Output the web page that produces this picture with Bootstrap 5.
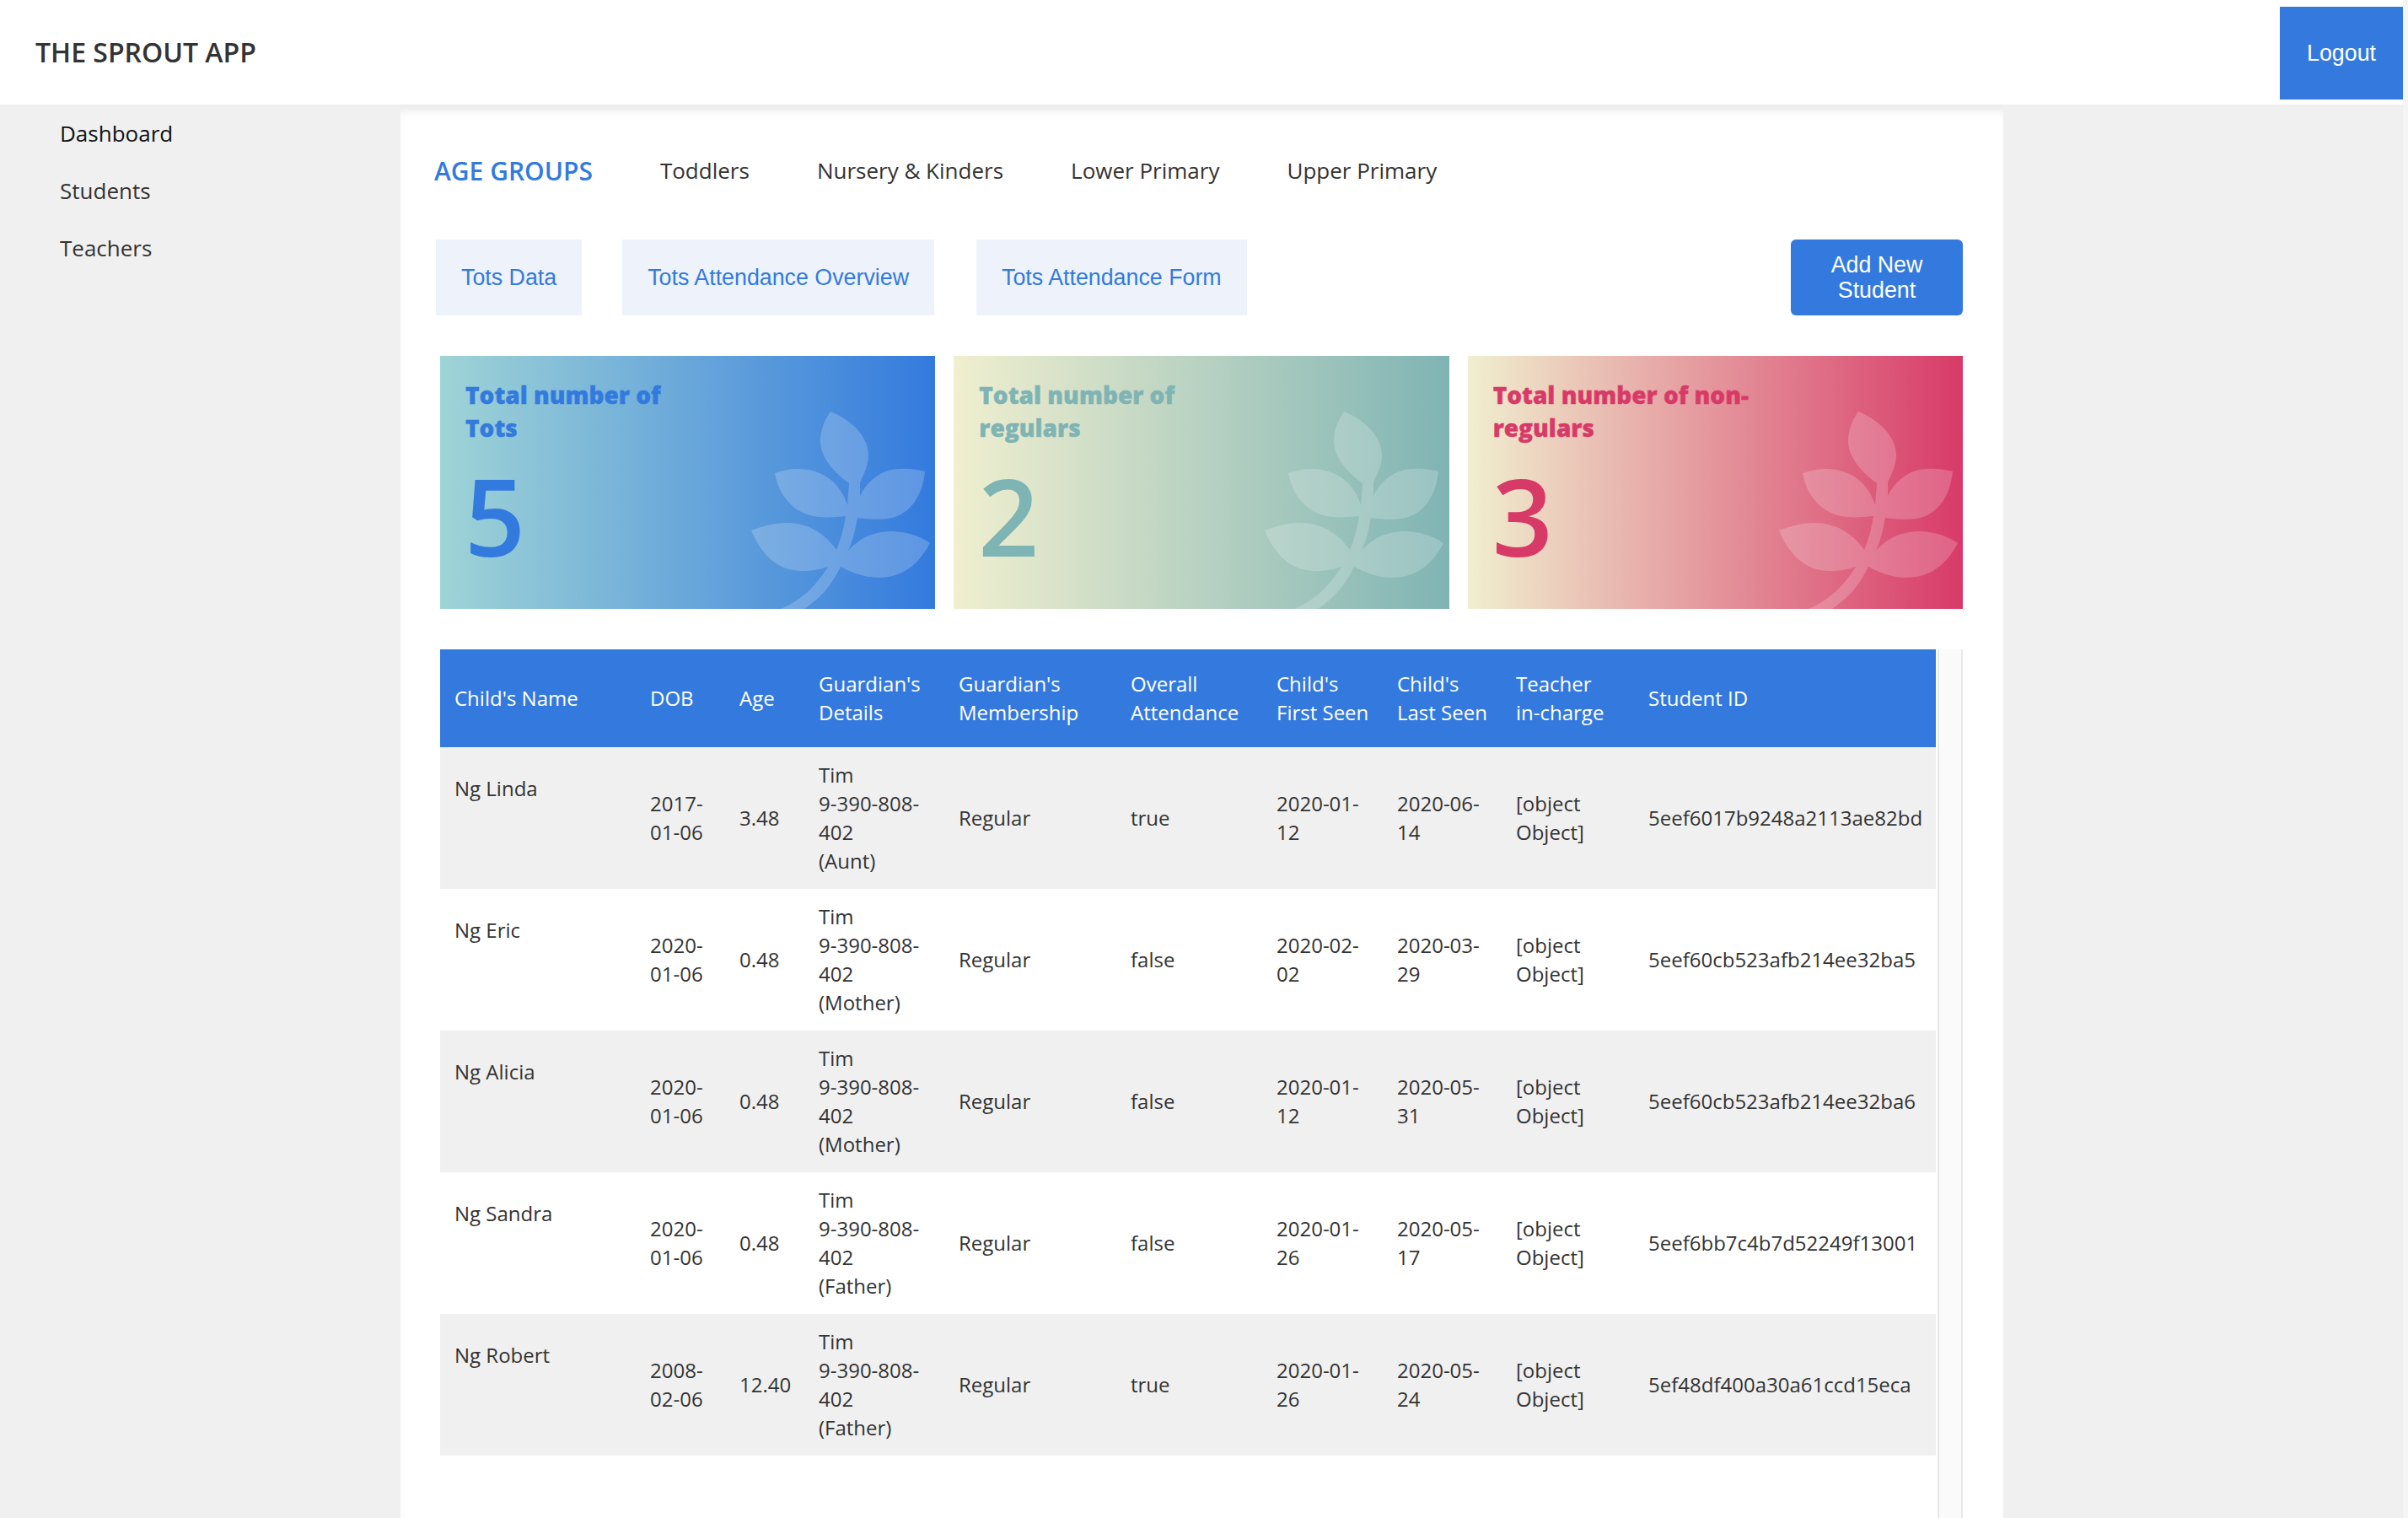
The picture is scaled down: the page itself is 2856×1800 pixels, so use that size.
<!DOCTYPE html>
<html lang="en">
<head>
    <meta charset="UTF-8">
    <meta name="viewport" content="width=device-width, initial-scale=1.0">
    <title>The Sprout App</title>
    <link rel="stylesheet" href="https://cdn.jsdelivr.net/npm/bootstrap@5.3.0/dist/css/bootstrap.min.css">
    <style>
        body {
            font-family: "Open Sans", sans-serif;
            color: #333;
            background: #f5f5f5;
            height: 1800px;
            overflow: hidden;
        }
        .app-shell { width: 2850px; height: 1800px; }

        /* Header */
        .app-header { height: 124px; background: #fff; padding: 8px 0 6px 42px; }
        .app-brand { font-size: 32px; font-weight: 600; color: #333; padding: 0; margin: 0 0 3px; }
        .logout-btn {
            width: 146px; height: 110px; border: 0; border-radius: 0;
            background: #347ade; color: #fff;
            font-family: "Liberation Sans", sans-serif; font-size: 26.8px;
        }

        /* Sidebar */
        .app-body { height: 1676px; background: #f0f0f0; }
        .side-menu { width: 475px; }
        .side-menu .nav-link { height: 68px; line-height: 68px; padding: 0 0 0 71px; font-size: 26px; color: #333; }
        .side-menu .nav-link.active { color: #111; }

        /* Main panel */
        .main-panel {
            width: 1901px; background: #fff; overflow: hidden;
            box-shadow: inset 0 14px 14px -8px rgba(0, 0, 0, .1);
        }
        .age-tabs { margin: 56px 0 0 40px; height: 44px; gap: 80px; align-items: center; }
        .age-tabs .nav-link { padding: 0; font-size: 26px; color: #333; }
        .age-title { font-size: 30px; font-weight: 600; color: #337ade; }

        .sub-row { margin: 60px 48px 0 42px; height: 90px; gap: 48px; }
        .sub-btn {
            height: 90px; padding: 0 30px; border: 0; border-radius: 0;
            background: #eef3fb; color: #337ade;
            font-family: "Liberation Sans", sans-serif; font-size: 26.8px;
        }
        .sub-btn:nth-child(3) { margin-left: 2px; }
        .add-btn {
            width: 204px; height: 90px; padding: 0 30px; border: 0; border-radius: 6px;
            background: #347ade; color: #fff; line-height: 30px;
            font-family: "Liberation Sans", sans-serif; font-size: 26.8px;
        }

        /* Summary tiles */
        .tile-row { margin: 48px 48px 0 47px; gap: 22px; }
        .stat-tile { flex: 1; height: 300px; position: relative; overflow: hidden; padding: 27px 30px; }
        .stat-tile h5 {
            font-size: 28px; line-height: 39px; font-weight: 800; margin: 0; color: inherit;
            white-space: nowrap; -webkit-text-stroke: .4px currentColor;
        }
        .stat-num { font-size: 126px; line-height: 126px; font-weight: 600; margin: 21px 0 0 -1px; }
        .tile-leaf { position: absolute; left: 0; top: 0; width: 588px; height: 300px; fill: #fff; opacity: .2; }
        .tile-blue { background: linear-gradient(90deg, #9fd4d6 0%, #337ade 100%); color: #337ade; }
        .tile-teal { background: linear-gradient(90deg, #f0efcf 0%, #7fb4b4 100%); color: #7fb4b4; }
        .tile-pink { background: linear-gradient(90deg, #f0efcf 0%, #d83a68 100%); color: #d83a68; }

        /* Table */
        .table-wrap { margin: 48px 48px 0 47px; flex-grow: 1; }
        .kids-table {
            width: 1774px; table-layout: fixed; align-self: flex-start; margin: 0;
            font-size: 24px; line-height: 34px;
            --bs-table-striped-bg: #f0f0f0; --bs-table-color: #333; --bs-table-striped-color: #333;
        }
        .kids-table > :not(caption) > * > * { border: 0; padding: 16px 18px; vertical-align: middle; }
        .kids-table thead th { background: #347ade; color: #fff; font-weight: 400; padding: 24px 18px; }
        .kids-table thead th:first-child { padding-left: 17px; }
        .kids-table thead th:nth-child(7), .kids-table thead th:nth-child(8) { padding-right: 8px; }
        .kids-table td.name-cell { vertical-align: top; padding: 32px 18px 16px 17px; }
        .fake-scroll {
            width: 30px; margin-left: 2px; background: #fafafa;
            border-left: 2px solid #e8e8e8; border-right: 2px solid #e8e8e8;
        }
    </style>
</head>
<body>

    <svg width="0" height="0" class="d-block">
        <symbol id="leaf" viewBox="22 22 588 300">
            <path d="M485 88 C510 98 530 118 530 140 C530 152 524 163 520 172 L520 188 C530 168 548 156 567 156 C578 155 588 157 597 159 C595 180 586 200 570 209 C558 217 538 217 517 214 C514 230 511 242 506 253 C518 240 532 231 556 230 C574 230 590 235 603 244 C592 265 574 285 542 285 C526 285 510 279 497 272 C486 295 472 310 454 322 L426 322 C450 312 468 295 482 272 C472 276 462 277 451 277 C420 277 402 255 391 229 C404 224 418 220 433 220 C458 220 478 232 492 252 C497 240 501 226 503 212 C492 213 482 214 473 213 C445 212 424 190 419 161 C428 158 437 156 446 156 C478 156 498 175 505 199 L507 173 C486 158 473 140 473 123 C473 110 478 98 485 88 Z"/>
        </symbol>
    </svg>

    <div class="app-shell d-flex flex-column">
        <!-- Header -->
        <header class="app-header d-flex align-items-center justify-content-between">
            <span class="navbar-brand app-brand">THE SPROUT APP</span>
            <button class="btn logout-btn">Logout</button>
        </header>

        <div class="app-body d-flex">
            <!-- Sidebar -->
            <nav class="side-menu nav flex-column align-content-start">
                <a class="nav-link active" href="#">Dashboard</a>
                <a class="nav-link" href="#">Students</a>
                <a class="nav-link" href="#">Teachers</a>
            </nav>

            <!-- Main panel -->
            <main class="main-panel d-flex flex-column">
                <div class="nav age-tabs">
                    <span class="age-title">AGE GROUPS</span>
                    <a class="nav-link" href="#">Toddlers</a>
                    <a class="nav-link" href="#">Nursery &amp; Kinders</a>
                    <a class="nav-link" href="#">Lower Primary</a>
                    <a class="nav-link" href="#">Upper Primary</a>
                </div>

                <div class="sub-row d-flex">
                    <button class="btn sub-btn">Tots Data</button>
                    <button class="btn sub-btn">Tots Attendance Overview</button>
                    <button class="btn sub-btn">Tots Attendance Form</button>
                    <button class="btn add-btn ms-auto">Add New Student</button>
                </div>

                <div class="tile-row d-flex">
                    <div class="stat-tile tile-blue">
                        <svg class="tile-leaf"><use href="#leaf"/></svg>
                        <h5>Total number of<br>Tots</h5>
                        <div class="stat-num">5</div>
                    </div>
                    <div class="stat-tile tile-teal">
                        <svg class="tile-leaf"><use href="#leaf"/></svg>
                        <h5>Total number of<br>regulars</h5>
                        <div class="stat-num">2</div>
                    </div>
                    <div class="stat-tile tile-pink">
                        <svg class="tile-leaf"><use href="#leaf"/></svg>
                        <h5>Total number of non-<br>regulars</h5>
                        <div class="stat-num">3</div>
                    </div>
                </div>

                <div class="table-wrap d-flex">
                    <table class="table table-striped kids-table">
                        <colgroup>
                            <col style="width:231px"><col style="width:106px"><col style="width:94px">
                            <col style="width:166px"><col style="width:204px"><col style="width:173px">
                            <col style="width:143px"><col style="width:141px"><col style="width:157px">
                            <col style="width:359px">
                        </colgroup>
                        <thead>
                            <tr>
                                <th>Child's Name</th>
                                <th>DOB</th>
                                <th>Age</th>
                                <th>Guardian's Details</th>
                                <th>Guardian's Membership</th>
                                <th>Overall Attendance</th>
                                <th>Child's First Seen</th>
                                <th>Child's Last Seen</th>
                                <th>Teacher in-charge</th>
                                <th>Student ID</th>
                            </tr>
                        </thead>
                        <tbody id="kids-body"></tbody>
                    </table>
                    <div class="fake-scroll"></div>
                </div>
            </main>
        </div>
    </div>

    <script>
        const kids = [
            { name: "Ng Linda", dob: "2017-01-06", age: "3.48", rel: "Aunt", present: "true", first: "2020-01-12", last: "2020-06-14", id: "5eef6017b9248a2113ae82bd" },
            { name: "Ng Eric", dob: "2020-01-06", age: "0.48", rel: "Mother", present: "false", first: "2020-02-02", last: "2020-03-29", id: "5eef60cb523afb214ee32ba5" },
            { name: "Ng Alicia", dob: "2020-01-06", age: "0.48", rel: "Mother", present: "false", first: "2020-01-12", last: "2020-05-31", id: "5eef60cb523afb214ee32ba6" },
            { name: "Ng Sandra", dob: "2020-01-06", age: "0.48", rel: "Father", present: "false", first: "2020-01-26", last: "2020-05-17", id: "5eef6bb7c4b7d52249f13001" },
            { name: "Ng Robert", dob: "2008-02-06", age: "12.40", rel: "Father", present: "true", first: "2020-01-26", last: "2020-05-24", id: "5ef48df400a30a61ccd15eca" }
        ];

        document.getElementById("kids-body").innerHTML = kids.map(kid => `
            <tr>
                <td class="name-cell">${kid.name}</td>
                <td>${kid.dob}</td>
                <td>${kid.age}</td>
                <td>Tim<br>9-390-808-402<br>(${kid.rel})</td>
                <td>Regular</td>
                <td>${kid.present}</td>
                <td>${kid.first}</td>
                <td>${kid.last}</td>
                <td>[object Object]</td>
                <td>${kid.id}</td>
            </tr>
        `).join("");
    </script>

    <script src="https://cdn.jsdelivr.net/npm/bootstrap@5.3.0/dist/js/bootstrap.bundle.min.js"></script>

</body>
</html>
